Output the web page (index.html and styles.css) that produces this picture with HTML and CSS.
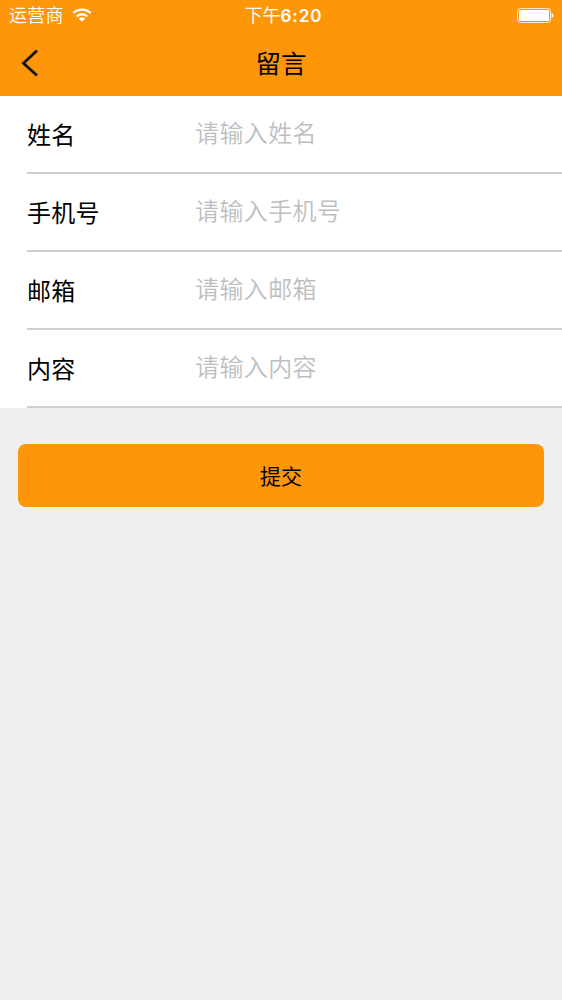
FILE: index.html
```html
<!DOCTYPE html>
<html lang="zh-CN">
<head>
<meta charset="utf-8">
<title>留言</title>
<link rel="stylesheet" href="styles.css">
</head>
<body>
<header class="header">
  <div class="status">
    <div class="carrier"><span>运营商</span>
      <svg class="wifi" width="20" height="14" viewBox="0 0 20 14"><path d="M1.3 5.2a12.3 12.3 0 0 1 17.4 0M4.6 8.5a7.6 7.6 0 0 1 10.8 0" fill="none" stroke="#fff" stroke-width="2.4"/><path d="M10 13.8L6.8 10.6a4.5 4.5 0 0 1 6.4 0z" fill="#fff"/></svg>
    </div>
    <div class="time">下午<b>6:20</b></div>
    <svg class="battery" width="37" height="15" viewBox="0 0 37 15"><rect x=".5" y=".5" width="33" height="14" rx="2.5" fill="none" stroke="#fff" stroke-opacity=".8"/><rect x="2" y="2" width="30" height="11" rx="1" fill="#fff"/><path d="M34.7 5a2.6 2.6 0 0 1 0 5z" fill="#fff"/></svg>
  </div>
  <nav class="nav">
    <svg class="back" width="18" height="28" viewBox="0 0 18 28"><path d="M16 1.5L2.5 14.3l13.5 12.2" fill="none" stroke="#111" stroke-width="2.8"/></svg>
    <h1 class="title">留言</h1>
  </nav>
</header>
<main>
  <form class="form">
    <label class="row"><span class="name">姓名</span><span class="hint">请输入姓名</span></label>
    <label class="row"><span class="name">手机号</span><span class="hint">请输入手机号</span></label>
    <label class="row"><span class="name">邮箱</span><span class="hint">请输入邮箱</span></label>
    <label class="row"><span class="name">内容</span><span class="hint">请输入内容</span></label>
  </form>
  <button class="submit" type="button">提交</button>
</main>
</body>
</html>
```
FILE: styles.css
```css
* { box-sizing: border-box; }
body { margin: 0; min-height: 1000px; background: #efefef; color: #000; font-family: "Liberation Sans", "Noto Sans CJK SC", sans-serif; }
.header { height: 96px; background: #fe960a; }
.status { height: 30px; display: grid; grid-template-columns: 1fr auto 1fr; align-items: center; padding: 0 8px 0 9px; color: #fff; font-size: 18px; line-height: 28px; }
.carrier { display: flex; align-items: center; gap: 8px; font-weight: 350; letter-spacing: .2px; }
.carrier span, .time { padding-top: 2px; }
.time { padding-left: 4px; }
.time b { font-family: Inter, sans-serif; font-weight: 600; font-size: 17px; letter-spacing: 1px; }
.wifi { margin-top: -1px; }
.battery { justify-self: end; }
.nav { height: 65px; display: grid; grid-template-columns: 1fr auto 1fr; align-items: center; padding: 0 21px; }
.title { margin: 0; padding-top: 2px; font-size: 25.5px; font-weight: 400; line-height: 36px; }
.form { background: #fff; padding-left: 27px; }
.row { height: 78px; display: flex; align-items: center; padding-top: 3px; border-bottom: 2px solid #d1d1d2; font-size: 24px; line-height: 36px; }
.name { width: 168px; padding-top: 1px; letter-spacing: .2px; }
.hint { color: #bebec1; font-weight: 350; padding-bottom: 3px; letter-spacing: .4px; }
.submit { display: block; width: calc(100% - 36px); height: 63px; margin: 36px 18px; padding: 2px 0 0; border: 0; border-radius: 8px; background: #fe960a; color: #000; font: 400 21px/61px "Liberation Sans", "Noto Sans CJK SC", sans-serif; }
```
